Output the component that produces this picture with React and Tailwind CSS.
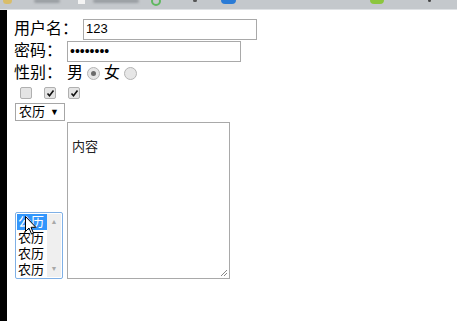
import React from 'react'

function TopBar() {
  return (
    <div className="flex h-[10px] shrink-0 items-start overflow-hidden border-b border-[#dfe2e5] bg-[#c4c8cc]">
      <span className="ml-[3px] mt-[-3px] h-[7px] w-[9px] rounded-sm bg-[#d9bd6a] blur-[0.5px]" />
      <span className="ml-[22px] mt-[-1px] h-[4px] w-[26px] rounded-full bg-[#9a9ea3] blur-[1px]" />
      <span className="ml-[18px] mt-[-2px] h-[6px] w-[7px] bg-[#f4f4f4] blur-[0.5px]" />
      <span className="ml-[8px] mt-[-1px] h-[4px] w-[46px] rounded-full bg-[#9a9ea3] blur-[1px]" />
      <span className="ml-[12px] mt-[-4px] h-[10px] w-[10px] rounded-full border-2 border-[#5fb860] blur-[0.5px]" />
      <span className="ml-[32px] mt-[-1px] h-[3px] w-[4px] rounded-full bg-[#555] blur-[0.5px]" />
      <span className="ml-[24px] mt-[-4px] h-[8px] w-[15px] rounded-sm bg-[#2a7bd6] blur-[0.5px]" />
      <span className="ml-[134px] mt-[-4px] h-[8px] w-[14px] rounded-full bg-[#8cc63e] blur-[0.5px]" />
      <span className="ml-[44px] mt-[-1px] h-[3px] w-[3px] rounded-full bg-[#444] blur-[0.5px]" />
    </div>
  )
}

function Radio({ checked }) {
  return (
    <span className="mx-[4px] inline-flex h-[13px] w-[13px] items-center justify-center rounded-full border border-[#b4b4b4] bg-[#e6e6e6]">
      {checked && <span className="h-[5px] w-[5px] rounded-full bg-[#6b6b6b]" />}
    </span>
  )
}

function Check({ checked }) {
  return (
    <span className="inline-flex h-[12px] w-[12px] items-center justify-center rounded-[2px] border border-[#b0b0b0] bg-[#e4e4e4]">
      {checked && (
        <svg width="9" height="9" viewBox="0 0 9 9">
          <path d="M1.5 4.5 L3.5 6.8 L7.5 1.5" fill="none" stroke="#111" strokeWidth="1.6" />
        </svg>
      )}
    </span>
  )
}

function Cursor() {
  return (
    <svg className="absolute left-[9px] top-[3px]" width="12" height="19" viewBox="0 0 12 19">
      <path d="M0.5 0.5 L0.5 15.5 L4 12 L6.5 18 L8.5 17.2 L6 11.3 L10.8 11.3 Z" fill="#fff" stroke="#000" strokeWidth="1" />
    </svg>
  )
}

export default function App() {
  return (
    <div className="flex h-screen flex-col bg-white font-['Liberation_Sans','Noto_Sans_CJK_SC',sans-serif] text-black">
      <TopBar />
      <div className="flex flex-1">
        <div className="w-[7px] bg-black" />
        <div className="flex-1 pl-[7px] pt-[8px]">
          {/* 用户名 */}
          <div className="flex h-[22px] items-center text-[16px] leading-[22px]">
            <span>用户名：</span>
            <input
              readOnly
              defaultValue="123"
              className="ml-[5px] h-[21px] w-[174px] border border-[#a9a9a9] px-[2px] text-[13px] outline-none"
            />
          </div>
          {/* 密码 */}
          <div className="flex h-[22px] items-center text-[16px] leading-[22px]">
            <span>密码：</span>
            <input
              readOnly
              type="password"
              defaultValue="12345678"
              className="ml-[5px] h-[21px] w-[174px] border border-[#a9a9a9] px-[2px] text-[14px] outline-none"
            />
          </div>
          {/* 性别 */}
          <div className="flex h-[22px] items-center text-[16px] leading-[22px]">
            <span>性别：</span>
            <span className="ml-[5px]">男</span>
            <Radio checked />
            <span>女</span>
            <Radio />
          </div>
          <div className="flex h-[16px] items-center gap-[12px] pl-[6px] pt-[2px]">
            <Check />
            <Check checked />
            <Check checked />
          </div>
          <div className="ml-[1px] flex h-[22px] items-center pt-[1px]">
            <div className="flex h-[18px] w-[50px] items-center justify-between border border-[#a6a6a6] bg-white pl-[3px] pr-[5px] text-[13px] leading-[16px]">
              <span>农历</span>
              <span className="text-[9px]">▼</span>
            </div>
          </div>
          <div className="ml-[1px] flex items-end gap-[4px]">
            <div className="relative flex h-[67px] w-[48px] rounded-[2px] border border-[#7fb0e6] p-[1px] text-[13px] leading-[16px]">
              <div className="flex-1">
                <div className="h-[16px] bg-[#3296fc] pl-[1px] text-white">公历</div>
                <div className="h-[16px] pl-[1px]">农历</div>
                <div className="h-[16px] pl-[1px]">农历</div>
                <div className="h-[16px] pl-[1px]">农历</div>
              </div>
              <div className="flex w-[14px] flex-col items-center justify-between bg-[#efefef] py-[4px] text-[7px] leading-[8px] text-[#a8a8a8]">
                <span>▲</span>
                <span>▼</span>
              </div>
              <Cursor />
            </div>
            <div className="relative h-[157px] w-[163px] border border-[#a9a9a9] pl-[4px] pt-[16px] text-[13px] leading-[16px] text-[#222]">
              内容
              <svg className="absolute bottom-[1px] right-[1px]" width="9" height="9" viewBox="0 0 9 9">
                <path d="M8 2 L2 8 M8 5 L5 8" stroke="#888" strokeWidth="1" />
              </svg>
            </div>
          </div>
        </div>
      </div>
    </div>
  )
}
